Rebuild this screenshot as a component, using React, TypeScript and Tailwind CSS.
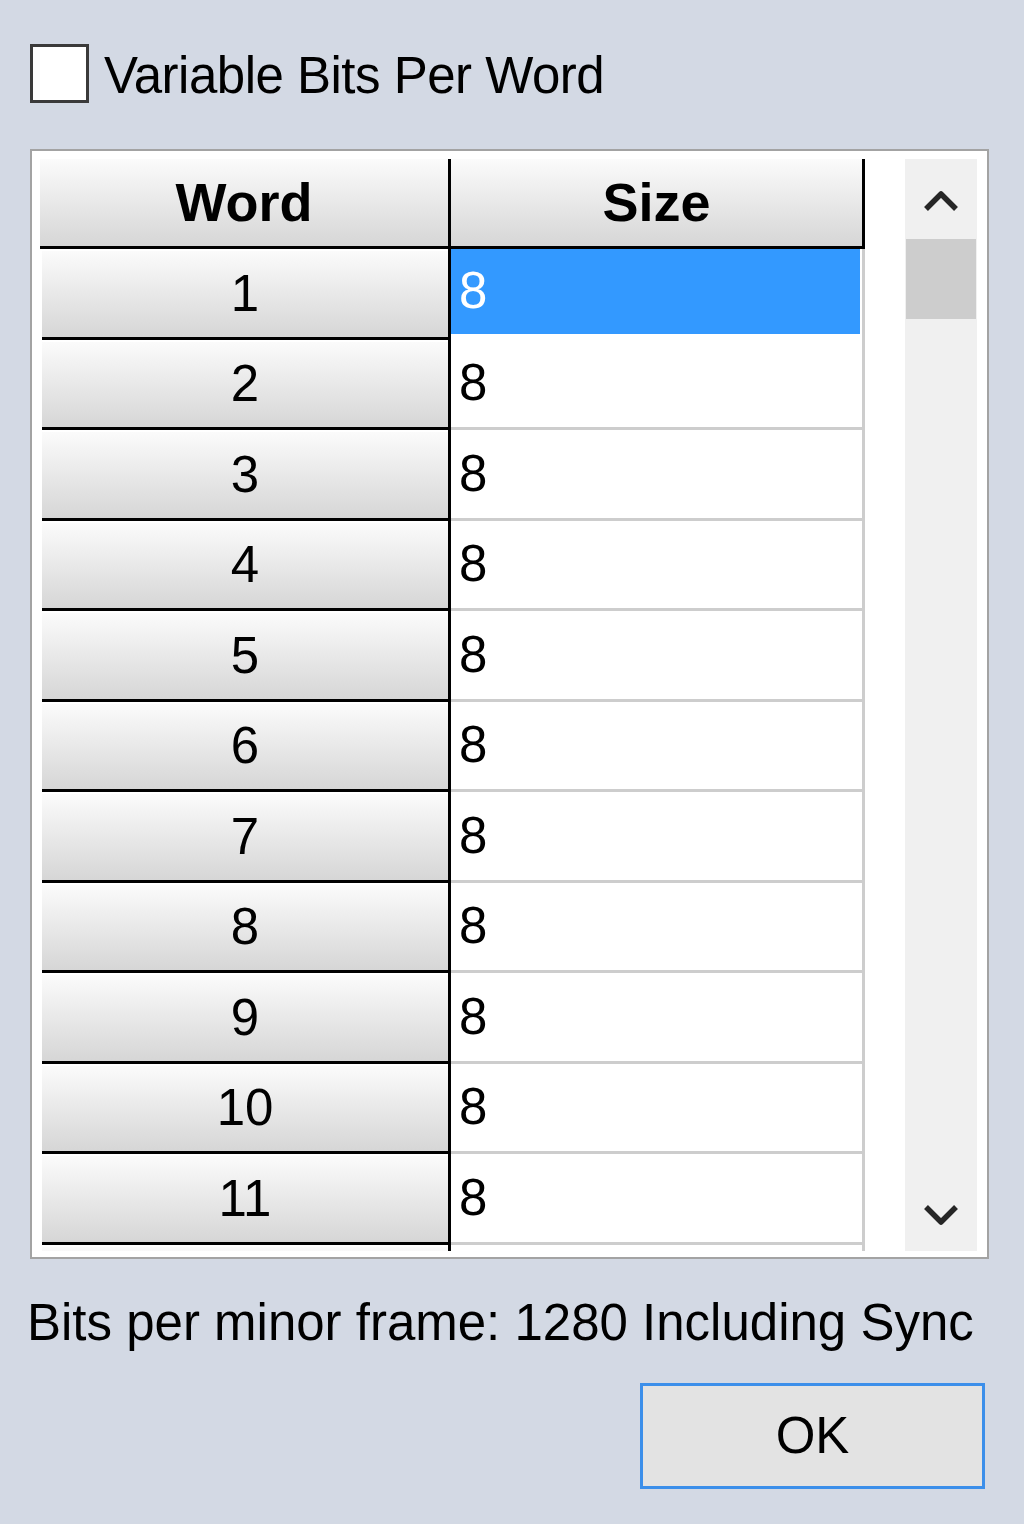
const rows = Array.from({ length: 11 }, (_, i) => ({ word: i + 1, size: 8 }));

function Chevron({ dir }: { dir: "up" | "down" }) {
  return (
    <svg width="38" height="28" viewBox="0 0 38 28" className="block">
      <path
        d={dir === "up" ? "M4 23 L19 8 L34 23" : "M4 6 L19 21 L34 6"}
        fill="none"
        stroke="#262626"
        strokeWidth="5.5"
        strokeLinejoin="round"
      />
    </svg>
  );
}

export default function App() {
  return (
    <div className="w-[1024px] h-[1524px] bg-[#d3d9e4] text-black font-['Liberation_Sans',Arial,sans-serif] overflow-hidden">
      <div className="flex items-center pl-[30px] pt-[44px]">
        <div className="w-[59px] h-[59px] border-[3px] border-[#3a3a3a] bg-white" />
        <span className="ml-[15px] text-[51px] leading-none tracking-[-0.5px] pt-[3px]">Variable Bits Per Word</span>
      </div>

      <div className="ml-[30px] mt-[46px] w-[959px] h-[1110px] border-2 border-[#a3a3a3] bg-white pt-[8px] pl-[8px] flex">
        <div className="w-[825px] h-[1092px] overflow-hidden">
          <div className="flex h-[90px]">
            <div className="w-[411px] flex items-center justify-center border-b-[3px] border-r-[3px] border-black bg-gradient-to-b from-[#fbfbfb] to-[#d6d6d6] text-[54px] font-bold">
              Word
            </div>
            <div className="w-[414px] flex items-center justify-center border-b-[3px] border-r-[3px] border-black bg-gradient-to-b from-[#fbfbfb] to-[#d6d6d6] text-[54px] font-bold">
              Size
            </div>
          </div>
          {rows.map((r, i) => (
            <div key={i} className="flex h-[90.5px]">
              <div className="w-[411px] border-r-[3px] border-black bg-white pt-[2px] pl-[2px]">
                <div className="h-full flex items-center justify-center border-b-[3px] border-black bg-gradient-to-b from-[#fbfbfb] to-[#d6d6d6] text-[51px]">
                  {r.word}
                </div>
              </div>
              <div
                className={
                  i === 0
                    ? "w-[414px] border-r-[3px] border-[#cdcdcd] bg-white"
                    : "w-[414px] border-r-[3px] border-b-[3px] border-[#cdcdcd] bg-white"
                }
              >
                {i === 0 ? (
                  <div className="h-[85px] w-[409px] bg-[#3399ff] text-white flex items-center pl-[8px] text-[51px]">
                    {r.size}
                  </div>
                ) : (
                  <div className="h-full flex items-center pl-[8px] text-[51px]">{r.size}</div>
                )}
              </div>
            </div>
          ))}
          <div className="flex h-[20px]">
            <div className="w-[411px] border-r-[3px] border-black bg-white pt-[2px] pl-[2px]">
              <div className="h-full bg-gradient-to-b from-[#fbfbfb] to-[#eeeeee]" />
            </div>
            <div className="w-[414px] border-r-[3px] border-[#cdcdcd] bg-white" />
          </div>
        </div>
        <div className="ml-[40px] w-[72px] h-[1092px] bg-[#f0f0f0] flex flex-col items-center">
          <div className="mt-[27px]">
            <Chevron dir="up" />
          </div>
          <div className="mt-[25px] w-[70px] h-[80px] bg-[#cdcdcd]" />
          <div className="mt-auto mb-[22px]">
            <Chevron dir="down" />
          </div>
        </div>
      </div>

      <div className="pl-[27px] mt-[38px] text-[51px] leading-none">Bits per minor frame: 1280 Including Sync</div>

      <div className="flex justify-end pr-[39px] mt-[35px]">
        <div className="w-[345px] h-[106px] border-[3px] border-[#3c8fea] bg-[#e3e3e3] flex items-center justify-center text-[51px]">
          OK
        </div>
      </div>
    </div>
  );
}
